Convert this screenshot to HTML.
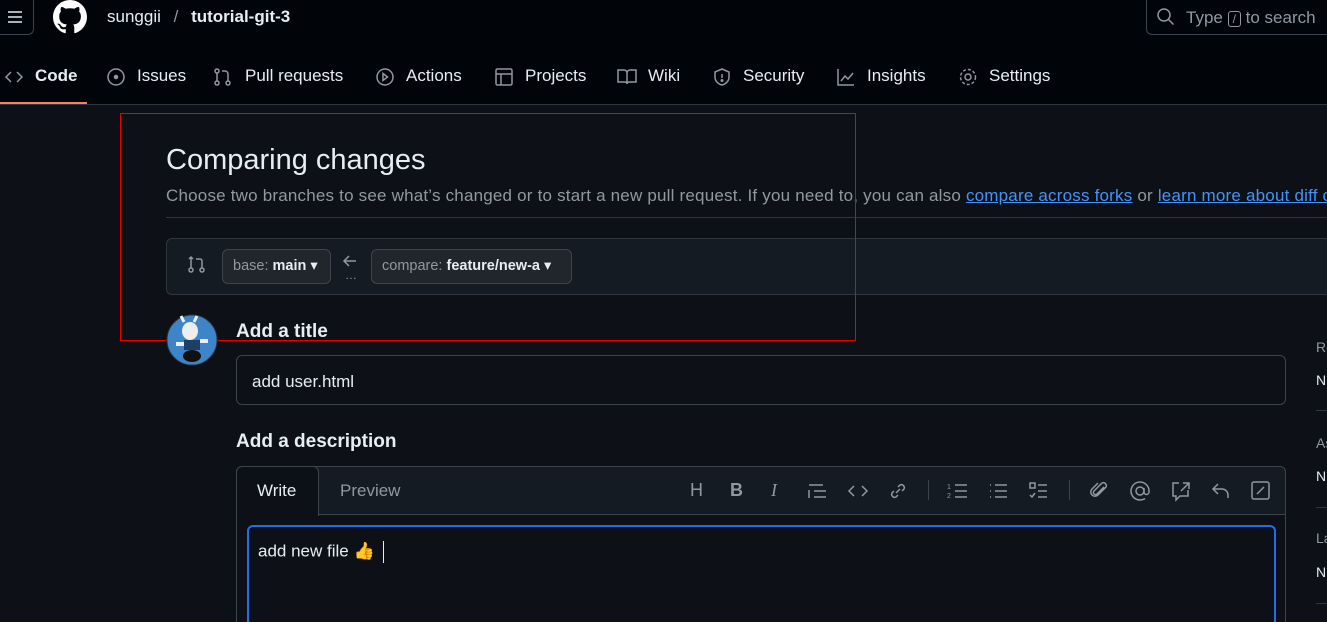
<!DOCTYPE html>
<html><head><style>
*{box-sizing:border-box;margin:0;padding:0}
html{width:1327px;height:622px;overflow:hidden}
body{width:1327px;height:622px;overflow:hidden;background:#0d1117;font-family:"Liberation Sans",sans-serif;color:#e6edf3;position:relative}
.hdr{position:absolute;left:0;top:0;width:1327px;height:105px;background:#010409;border-bottom:1px solid #30363d}
.a{position:absolute;white-space:nowrap}
.nav{font-size:17px;color:#e6edf3;top:66px}
.ic{position:absolute;stroke:#9198a1;fill:none;stroke-width:1.5}
.btn{position:absolute;background:#21262d;border:1px solid #3d444d;border-radius:6px;font-size:14.5px;color:#9198a1;padding:0 10px;height:35px;line-height:33px}
.btn b{color:#e6edf3;font-weight:bold}
.tb{position:absolute;top:480px;font-size:18px;color:#9198a1}
.side{position:absolute;left:1316px;font-size:14px}
.hr{position:absolute;left:1316px;width:11px;height:1px;background:#30363d}
</style></head><body>
<div class="hdr"></div>
<div class="a" style="left:0;top:0;width:34px;height:35px;border:1px solid #3d444d;border-left:none;border-top:none;border-radius:0 0 6px 0"></div>
<svg class="ic" style="left:6px;top:8px" width="18" height="18" viewBox="0 0 18 18"><path d="M2 4h14M2 9h14M2 14h14" stroke="#e6edf3"/></svg>
<svg style="position:absolute;left:52px;top:0" width="36" height="34" viewBox="0 0 16 16"><path fill="#fff" d="M8 0C3.580 0 0 3.580 0 8c0 3.540 2.290 6.530 5.470 7.590.4.070.550-.170.550-.380 0-.190-.010-.820-.010-1.490-2.010.370-2.530-.490-2.690-.940-.090-.230-.480-.940-.820-1.130-.280-.150-.680-.520-.010-.530.630-.010 1.080.580 1.230.820.720 1.210 1.870.870 2.330.660.070-.520.280-.870.510-1.070-1.780-.2-3.640-.890-3.640-3.950 0-.870.310-1.590.820-2.150-.080-.2-.360-1.020.080-2.120 0 0 .670-.210 2.200.820.640-.180 1.320-.270 2-.270.680 0 1.360.090 2 .270 1.530-1.040 2.200-.820 2.200-.820.440 1.100.160 1.920.080 2.120.510.560.820 1.270.820 2.150 0 3.070-1.870 3.750-3.650 3.950.290.250.540.730.540 1.480 0 1.070-.010 1.930-.010 2.200 0 .210.150.460.550.380A8.013 8.013 0 0016 8c0-4.420-3.580-8-8-8z"/></svg>
<div class="a" style="left:107px;top:7px;font-size:17px">sunggii <span style="color:#9198a1;margin:0 8px">/</span> <b>tutorial-git-3</b></div>
<div class="a" style="left:1146px;top:0;width:181px;height:35px;border:1px solid #3d444d;border-top:none;border-right:none;border-radius:0 0 0 6px"></div>
<svg class="ic" style="left:1156px;top:7px" width="20" height="20" viewBox="0 0 20 20"><circle cx="8" cy="8" r="6"/><path d="M12.5 12.5l5 5"/></svg>
<div class="a" style="left:1186px;top:8px;font-size:17px;color:#9198a1">Type <span style="border:1px solid #9198a1;border-radius:3px;font-size:12px;padding:0 4px">/</span> to search</div>

<svg class="ic" style="left:4px;top:68px" width="20" height="18" viewBox="0 0 20 18"><path d="M7 4L2 9l5 5M13 4l5 5-5 5"/></svg>
<div class="a nav" style="left:35px;font-weight:bold">Code</div>
<div class="a" style="left:0;top:102px;width:87px;height:2px;background:#f78166"></div>
<svg class="ic" style="left:106px;top:67px" width="20" height="20"><circle cx="10" cy="10" r="8"/><circle cx="10" cy="10" r="1.5" fill="#9198a1"/></svg>
<div class="a nav" style="left:137px">Issues</div>
<svg class="ic" style="left:213px;top:67px" width="20" height="20"><circle cx="4" cy="4" r="2"/><circle cx="4" cy="16" r="2"/><circle cx="15" cy="16" r="2"/><path d="M4 6v8M15 14V7a3 3 0 0 0-3-3H9"/></svg>
<div class="a nav" style="left:245px">Pull requests</div>
<svg class="ic" style="left:375px;top:67px" width="20" height="20"><circle cx="10" cy="10" r="8"/><path d="M8 6.5l4.5 3.5L8 13.5z"/></svg>
<div class="a nav" style="left:406px">Actions</div>
<svg class="ic" style="left:494px;top:67px" width="20" height="20"><rect x="2" y="2" width="16" height="16" rx="1.5"/><path d="M2 7h16M7 7v11"/></svg>
<div class="a nav" style="left:525px">Projects</div>
<svg class="ic" style="left:616px;top:67px" width="22" height="20"><path d="M2 3h6a3 3 0 0 1 3 3v11a2 2 0 0 0-2-2H2zM20 3h-6a3 3 0 0 0-3 3v11a2 2 0 0 1 2-2h7z"/></svg>
<div class="a nav" style="left:648px">Wiki</div>
<svg class="ic" style="left:712px;top:67px" width="20" height="20"><path d="M10 2l7 3v5c0 4-3 7-7 8-4-1-7-4-7-8V5z"/><path d="M10 7v4"/><circle cx="10" cy="13.5" r=".8" fill="#9198a1"/></svg>
<div class="a nav" style="left:743px">Security</div>
<svg class="ic" style="left:836px;top:67px" width="20" height="20"><path d="M2 2v16h16M5 14l4-5 3 3 5-6"/></svg>
<div class="a nav" style="left:867px">Insights</div>
<svg class="ic" style="left:957px;top:66px" width="22" height="22"><circle cx="11" cy="11" r="3"/><circle cx="11" cy="11" r="7.5" stroke-dasharray="3 2"/></svg>
<div class="a nav" style="left:989px">Settings</div>

<div class="a" style="left:166px;top:144px;font-size:29px">Comparing changes</div>
<div class="a" style="left:166px;top:186px;width:1161px;overflow:hidden;font-size:17px;color:#9198a1;letter-spacing:0.2px">Choose two branches to see what’s changed or to start a new pull request. If you need to, you can also <span style="color:#4493f8;text-decoration:underline">compare across forks</span> or <span style="color:#4493f8;text-decoration:underline">learn more about diff comparisons</span></div>
<div class="a" style="left:166px;top:217px;width:1161px;height:1px;background:#30363d"></div>
<div class="a" style="left:166px;top:238px;width:1161px;height:57px;border:1px solid #30363d;border-right:none;border-radius:6px 0 0 6px;background:#151b23"></div>
<svg class="ic" style="left:187px;top:255px" width="20" height="20"><circle cx="4" cy="15" r="2"/><circle cx="15" cy="15" r="2"/><path d="M4 13V2M2 4l2-2 2 2M15 13V6a2 2 0 0 0-2-2H9"/></svg>
<div class="btn" style="left:222px;top:249px;width:109px"><span>base:</span> <b>main</b> <span style="color:#e6edf3">▾</span></div>
<svg class="ic" style="left:342px;top:253px" width="16" height="16"><path d="M14 8H2M7 3L2 8l5 5"/></svg>
<div class="a" style="left:345px;top:268px;font-size:12px;color:#9198a1">…</div>
<div class="btn" style="left:371px;top:249px;width:201px"><span>compare:</span> <b>feature/new-a</b> <span style="color:#e6edf3">▾</span></div>

<div class="a" style="left:120px;top:113px;width:736px;height:228px;border:1px solid #e00"></div>

<svg style="position:absolute;left:166px;top:314px" width="52" height="52"><circle cx="26" cy="26" r="25" fill="#3d84c8" stroke="#30363d"/><ellipse cx="24" cy="17" rx="8" ry="9" fill="#eee"/><path d="M18 8l-3-6M28 8l3-6" stroke="#eee" stroke-width="3"/><rect x="18" y="26" width="16" height="10" fill="#1c3f66"/><ellipse cx="26" cy="42" rx="9" ry="6" fill="#111"/><rect x="10" y="28" width="8" height="4" fill="#eee"/><rect x="34" y="25" width="8" height="4" fill="#eee"/></svg>
<div class="a" style="left:236px;top:321px;font-size:19px;font-weight:bold">Add a title</div>
<div class="a" style="left:236px;top:355px;width:1050px;height:50px;border:1px solid #3d444d;border-radius:6px;background:#0d1117"></div>
<div class="a" style="left:252px;top:372px;font-size:17px">add user.html</div>
<div class="a" style="left:236px;top:431px;font-size:19px;font-weight:bold">Add a description</div>
<div class="a" style="left:236px;top:466px;width:1050px;height:156px;border:1px solid #3d444d;border-bottom:none;border-radius:6px 6px 0 0;background:#0d1117"></div>
<div class="a" style="left:237px;top:467px;width:1048px;height:48px;background:#151b23;border-bottom:1px solid #3d444d;border-radius:6px 6px 0 0"></div>
<div class="a" style="left:236px;top:466px;width:83px;height:50px;background:#0d1117;border:1px solid #3d444d;border-bottom:none;border-radius:6px 6px 0 0"></div>
<div class="a" style="left:257px;top:481px;font-size:17px">Write</div>
<div class="a" style="left:340px;top:481px;font-size:17px;color:#9198a1">Preview</div>
<div class="tb" style="left:690px">H</div>
<div class="tb" style="left:730px;font-weight:bold">B</div>
<div class="tb" style="left:771px;font-style:italic;font-family:'Liberation Serif',serif">I</div>
<svg class="ic" style="left:807px;top:482px" width="22" height="18"><path d="M2 3h14M7 9h12M7 15h12M2 8v8"/></svg>
<svg class="ic" style="left:847px;top:482px" width="22" height="18"><path d="M7 4L2 9l5 5M15 4l5 5-5 5"/></svg>
<svg class="ic" style="left:887px;top:480px" width="22" height="22"><path d="M9 13l4-4M7 11l-2 2a3 3 0 0 0 4 4l2-2M15 11l2-2a3 3 0 0 0-4-4l-2 2"/></svg>
<div class="a" style="left:928px;top:480px;width:1px;height:20px;background:#3d444d"></div>
<svg class="ic" style="left:947px;top:481px" width="22" height="20"><path d="M8 4h12M8 10h12M8 16h12"/><text x="0" y="8" font-size="7" fill="#9198a1" stroke="none">1</text><text x="0" y="17" font-size="7" fill="#9198a1" stroke="none">2</text></svg>
<svg class="ic" style="left:988px;top:481px" width="22" height="20"><path d="M7 4h12M7 10h12M7 16h12M2 4h1M2 10h1M2 16h1"/></svg>
<svg class="ic" style="left:1028px;top:481px" width="22" height="20"><rect x="2" y="2" width="5" height="5"/><path d="M10 4h9M10 10h9M10 16h9M2 14l2 2 3-4"/></svg>
<div class="a" style="left:1069px;top:480px;width:1px;height:20px;background:#3d444d"></div>
<svg class="ic" style="left:1089px;top:480px" width="22" height="22"><path d="M15 7l-7 7a2 2 0 0 1-3-3l8-8a3 3 0 0 1 4 4l-8 8a4 4 0 0 1-6-6l6-6"/></svg>
<svg class="ic" style="left:1129px;top:480px" width="22" height="22"><circle cx="11" cy="11" r="4"/><path d="M15 8v4a2.5 2.5 0 0 0 5 0v-1a9 9 0 1 0-4 7.5"/></svg>
<svg class="ic" style="left:1170px;top:480px" width="22" height="22"><path d="M9 3H3v13h3v4l4-4h8v-6M13 3h6v6M19 3l-8 8"/></svg>
<svg class="ic" style="left:1210px;top:481px" width="22" height="20"><path d="M8 3L3 8l5 5M3 8h9a6 6 0 0 1 6 6v3"/></svg>
<svg class="ic" style="left:1250px;top:480px" width="22" height="22"><rect x="2" y="2" width="17" height="17" rx="2"/><path d="M7 14l7-7"/></svg>
<div class="a" style="left:247px;top:525px;width:1029px;height:97px;border:2px solid #1f6feb;border-bottom:none;border-radius:6px 6px 0 0"></div>
<div class="a" style="left:258px;top:541px;font-size:17px">add new file 👍 <span style="display:inline-block;width:1px;height:22px;background:#e6edf3;vertical-align:middle;margin-left:4px"></span></div>

<div class="side" style="top:339px;color:#9198a1">Re</div>
<div class="side" style="top:372px">N</div>
<div class="hr" style="top:410px"></div>
<div class="side" style="top:435px;color:#9198a1">As</div>
<div class="side" style="top:468px">N</div>
<div class="hr" style="top:507px"></div>
<div class="side" style="top:530px;color:#9198a1">La</div>
<div class="side" style="top:564px">N</div>
<div class="hr" style="top:603px"></div>
</body></html>
